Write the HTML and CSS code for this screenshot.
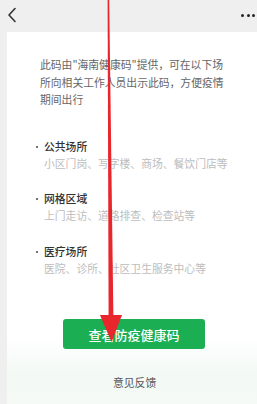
FILE: index.html
```html
<!DOCTYPE html>
<html lang="zh">
<head>
<meta charset="utf-8">
<link rel="stylesheet" href="styles.css">
</head>
<body>
<div class="page">
  <header class="topbar">
    <svg class="back" width="10" height="16" viewBox="0 0 10 16"><path d="M8 1.5 L2 8 L8 14.5" fill="none" stroke="#333" stroke-width="1.6" stroke-linecap="round" stroke-linejoin="round"/></svg>
    <div class="more"><span></span><span></span><span></span></div>
  </header>
  <main class="card">
    <p class="intro">此码由"海南健康码"提供，可在以下场所向相关工作人员出示此码，方便疫情期间出行</p>
    <section class="place">
      <h3 class="title">公共场所</h3>
      <p class="desc">小区门岗、写字楼、商场、餐饮门店等</p>
    </section>
    <section class="place">
      <h3 class="title">网格区域</h3>
      <p class="desc">上门走访、道路排查、检查站等</p>
    </section>
    <section class="place">
      <h3 class="title">医疗场所</h3>
      <p class="desc">医院、诊所、社区卫生服务中心等</p>
    </section>
    <button class="cta">查看防疫健康码</button>
    <a class="feedback">意见反馈</a>
  </main>
  <svg class="arrow" width="257" height="404" viewBox="0 0 257 404">
    <polygon points="107.6,0 109.2,0 113.4,317 108.6,317" fill="#e8262c"/>
    <polygon points="100,315 122,315 111.5,342" fill="#e8262c"/>
  </svg>
</div>
</body>
</html>
```

FILE: styles.css
```css
* { box-sizing: border-box; margin: 0; padding: 0; }
html, body { width: 257px; height: 404px; overflow: hidden; }
body {
  background: #efefef;
  font-family: "Noto Sans CJK SC", "Noto Sans", sans-serif;
}
.page {
  position: relative;
  width: 257px;
  height: 404px;
  display: flex;
  flex-direction: column;
}
.topbar {
  height: 32px;
  display: flex;
  align-items: center;
  justify-content: space-between;
  padding: 0 2px 0 7px;
}
.back { display: block; margin-top: -2px; }
.more { display: flex; gap: 2.5px; margin-top: -2px; }
.more span {
  width: 3px; height: 3px; border-radius: 50%;
  background: #222;
}
.card {
  flex: 1;
  margin-left: 7px;
  background: linear-gradient(180deg, #ffffff 0%, #ffffff 82%, #f3f9f5 92%, #f5faf7 100%);
  padding: 24px 20px 0 28px;
  display: flex;
  flex-direction: column;
}
.intro {
  margin-left: 5px;
  font-size: 10.8px;
  line-height: 17.5px;
  color: #666;
  width: 190px;
}
.place { margin-top: 29px; }
.place + .place { margin-top: 18px; }
.title {
  position: relative;
  padding-left: 9px;
  font-size: 10.8px;
  line-height: 17px;
  font-weight: 500;
  color: #333;
}
.title::before {
  content: "";
  position: absolute;
  left: 1px;
  top: 8px;
  width: 2px;
  height: 2px;
  border-radius: 50%;
  background: #444;
}
.desc {
  margin-left: 9px;
  font-size: 10.8px;
  line-height: 17.5px;
  color: #bdbdbd;
}
.cta {
  margin-top: 42px;
  margin-left: 28px;
  width: 142px;
  height: 30px;
  border: 0;
  border-radius: 3px;
  background: #1cae52;
  color: #fff;
  font-family: inherit;
  font-size: 13px;
  font-weight: 500;
  align-self: flex-start;
}
.feedback {
  margin-top: 25px;
  margin-left: 78px;
  font-size: 10.8px;
  line-height: 17px;
  color: #555;
}
.arrow { position: absolute; left: 0; top: 0; pointer-events: none; }
```
